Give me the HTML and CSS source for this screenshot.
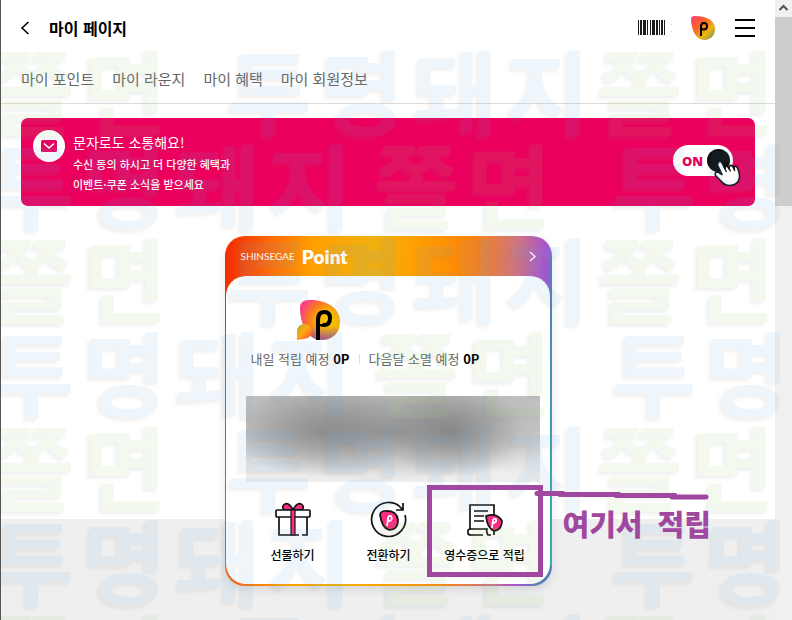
FILE: index.html
```html
<!DOCTYPE html>
<html lang="ko">
<head>
<meta charset="utf-8">
<meta name="viewport" content="width=device-width, initial-scale=1">
<title>마이 페이지</title>
<link rel="stylesheet" href="styles.css">
</head>
<body>
<div class="page">
  <header class="topbar">
    <button class="icon-btn" aria-label="뒤로"><svg width="10" height="14" viewBox="0 0 10 14"><path d="M7.500 1 L1 7 L7.500 13" fill="none" stroke="#000" stroke-width="1.600"/></svg></button>
    <h1>마이 페이지</h1>
    <div class="tools">
      <button class="icon-btn" aria-label="바코드"><svg width="33" height="16" viewBox="0 0 33 16"><path d="M0 0h1v15H0zM2 0h2v15H2zM5 0h3v15H5zM9 0h1v15H9zM12 0h1v15h-1zM14 0h3v15h-3zM18 0h2v15h-2zM21 0h1v15h-1zM23 0h2v15h-2zM26 0h1v15h-1z" fill="#1c1c1c"/><path d="M33 4h1v1h-1zM33 11h1v1h-1z" fill="#ffc37a"/></svg></button>
      <button class="icon-btn" aria-label="포인트"><svg width="24" height="25" viewBox="0 0 24 25">
        <defs><linearGradient id="drop" x1="0" y1="0" x2="1" y2="1"><stop offset="0" stop-color="#fb3b78"/><stop offset=".4" stop-color="#fa6b20"/><stop offset=".68" stop-color="#efb512"/><stop offset=".84" stop-color="#a7a33a"/><stop offset="1" stop-color="#9b4aa0"/></linearGradient></defs>
        <path d="M0 3Q0 0 4 0C15 0 24 4 24 13C24 20 19 24 13 24C6 24 0 15 0 3Z" fill="url(#drop)"/>
        <path d="M10 20V11Q10 7 13 7Q16 7 16 10Q16 13.500 12.500 13.500Q11 13.500 10 12" fill="none" stroke="#000" stroke-width="2"/></svg></button>
      <button class="icon-btn" aria-label="메뉴"><svg width="20" height="18" viewBox="0 0 20 18"><path d="M0 1h20M0 9h20M0 17h20" stroke="#000" stroke-width="2"/></svg></button>
    </div>
  </header>
  <nav class="tabs">
    <a href="#point">마이 포인트</a><a href="#lounge">마이 라운지</a><a href="#benefit">마이 혜택</a><a href="#member">마이 회원정보</a>
  </nav>
  <main>
    <section class="banner">
      <span class="mail"><svg width="16" height="12" viewBox="0 0 16 12"><rect width="16" height="12" rx="1.500" fill="#e5075f"/><path d="M3 3.500L8 8L13 3.500" fill="none" stroke="#fff" stroke-width="1.600"/></svg></span>
      <div class="banner-text">
        <h2>문자로도 소통해요!</h2>
        <p>수신 동의 하시고 더 다양한 혜택과<br>이벤트·쿠폰 소식을 받으세요</p>
      </div>
      <button class="toggle"><span>ON</span><i class="knob"></i>
        <svg class="hand" width="27" height="27" viewBox="0 0 27 27"><path d="M4 2.500Q6 0 8 3L11 9Q11 5 14 7L15 9Q15 4 18.500 6L20 9Q20 5 23 7Q26 13 25.500 18Q24 25 16 25.500Q10 25.500 7 21L1.500 15.500Q0 12 4 12L8 14.500L3.500 5Z" fill="#fff" stroke="#111" stroke-width="1.600" stroke-linejoin="round"/><path d="M11 9l1.500 3M15 8l1.500 3.500M20 8.500l.8 2.500" stroke="#111" stroke-width="1.300"/></svg>
      </button>
    </section>
    <div class="stage">
      <section class="card">
        <header class="card-head"><span class="brand-small">SHINSEGAE</span><strong>Point</strong>
          <svg class="chev" width="7" height="11" viewBox="0 0 7 11"><path d="M1 1L6 5.500L1 10" fill="none" stroke="#fff" stroke-width="1.300"/></svg>
        </header>
        <div class="card-body">
          <svg class="mark" width="44" height="41" viewBox="0 0 44 41">
            <defs>
              <radialGradient id="big" cx=".72" cy=".55" r=".75"><stop offset="0" stop-color="#f5cc00"/><stop offset=".4" stop-color="#f7ae0a"/><stop offset=".7" stop-color="#fb7426"/><stop offset="1" stop-color="#fa3f86"/></radialGradient>
              <linearGradient id="shade" x1="0" y1="0" x2="0" y2="1"><stop offset=".65" stop-color="#8652ad" stop-opacity="0"/><stop offset="1" stop-color="#8652ad" stop-opacity=".8"/></linearGradient>
              <linearGradient id="dot" x1="0" y1="0" x2="1" y2="1"><stop offset="0" stop-color="#a8a83a"/><stop offset=".45" stop-color="#ffaa11"/><stop offset="1" stop-color="#ff4438"/></linearGradient>
            </defs>
            <path d="M3 8Q3 0 12 0C30 0 43 8 43 22C43 34 34 40 24 40C11 40 3 24 3 8Z" fill="url(#big)"/>
            <path d="M3 8Q3 0 12 0C30 0 43 8 43 22C43 34 34 40 24 40C11 40 3 24 3 8Z" fill="url(#shade)"/>
            <path d="M0 32Q0 24 8 24Q15 25 15 32Q14 38 7 39L0 40Z" fill="url(#dot)"/>
            <path d="M21 40V20Q21 12 27 12Q33 12 33 18Q33 25 27 25Q24 25 24 24" fill="none" stroke="#000" stroke-width="4"/>
          </svg>
          <p class="stats"><span>내일 적립 예정 <b>0P</b></span><i></i><span>다음달 소멸 예정 <b>0P</b></span></p>
          <div class="hidden-area"></div>
          <div class="actions">
            <button><svg width="36" height="36" viewBox="0 0 36 36" fill="none" stroke="#111" stroke-width="1.700"><path d="M18 8Q14 0 10 2Q6 4 9 8zM18 8Q22 0 26 2Q30 4 27 8z" fill="#fa2c84"/><path d="M4 15V33H24M27 33H32V15"/><rect x="1" y="8" width="34" height="7" rx="1" fill="#fff"/><path d="M16 8h4v25h-4z" fill="#fa2c84" stroke-width="1.200"/></svg>선물하기</button>
            <button><svg width="36" height="36" viewBox="0 0 36 36" fill="none" stroke="#111" stroke-width="1.700"><path d="M31 7A17 17 0 1 0 34 13M32 1V8H25"/><path d="M9 13Q9 10 13 9Q26 8 27 18Q27 28 18 28Q11 26 9 13Z" fill="#fa2c84"/><path d="M16 24L17 16Q18 13 20 14Q22 17 19 19Q17 19 17 17" stroke="#fff"/></svg>전환하기</button>
            <button><svg width="36" height="36" viewBox="0 0 36 36" fill="none" stroke="#111" stroke-width="1.700"><path d="M3 27V3H27V14M7 9H21M7 14H17M7 19H17M4 27H20Q19 30 21 33H24M4 27Q0 27 1 31Q1 33 4 33H16M27 27V33"/><path d="M19 14Q30 10 35 19Q35 28 27 29Q20 26 19 14Z" fill="#fa2c84"/><path d="M25 26L26 18Q27 16 29 17Q30 20 27 21Q26 21 26 19" stroke="#fff"/></svg>영수증으로 적립</button>
          </div>
        </div>
        <div class="highlight"></div>
        <svg class="stroke-line" width="174" height="10" viewBox="0 0 174 10"><path d="M2 2.500H28M25 3.500H84M81 4.500H140M137 6H171" stroke="#a047a0" stroke-width="5" stroke-linecap="round"/></svg>
        <p class="note"><span>여기서</span><span>적립</span></p>
      </section>
    </div>
  </main>
</div>
<div class="scroll" aria-hidden="true"><svg width="17" height="17" viewBox="0 0 17 17"><path d="M4.500 10L8.500 6L12.500 10" fill="none" stroke="#505050" stroke-width="2"/></svg><div class="thumb"></div></div>
<div class="watermark" aria-hidden="true">
  <div class="row a"><div class="green"><span>쫄</span><span>면</span></div><div><span>투</span><span>명</span><span>돼</span><span>지</span></div><div class="green"><span>쫄</span><span>면</span></div></div>
  <div class="row b"><div><span>투</span><span>명</span><span>돼</span><span>지</span></div><div class="green"><span>쫄</span><span>면</span></div><div><span>투</span><span>명</span></div></div>
  <div class="row a"><div class="green"><span>쫄</span><span>면</span></div><div><span>투</span><span>명</span><span>돼</span><span>지</span></div><div class="green"><span>쫄</span><span>면</span></div></div>
  <div class="row b"><div><span>투</span><span>명</span><span>돼</span><span>지</span></div><div class="green"><span>쫄</span><span>면</span></div><div><span>투</span><span>명</span></div></div>
  <div class="row a"><div class="green"><span>쫄</span><span>면</span></div><div><span>투</span><span>명</span><span>돼</span><span>지</span></div><div class="green"><span>쫄</span><span>면</span></div></div>
  <div class="row b"><div><span>투</span><span>명</span><span>돼</span><span>지</span></div><div class="green"><span>쫄</span><span>면</span></div><div><span>투</span><span>명</span></div></div>
  <div class="row a"><div class="green"><span>쫄</span><span>면</span></div><div><span>투</span><span>명</span><span>돼</span><span>지</span></div><div class="green"><span>쫄</span><span>면</span></div></div>
</div>
</body>
</html>
```
FILE: styles.css
```css
* { box-sizing: border-box; margin: 0; padding: 0; }
body {
  position: relative;
  display: flex;
  min-height: 100vh;
  overflow: hidden;
  background: #efefef;
  border-left: 1px solid #555;
  font-family: "Noto Sans CJK KR", "Noto Sans", sans-serif;
  color: #000;
}
button { border: 0; background: none; font: inherit; color: inherit; }
svg { display: block; flex: none; overflow: visible; }
.page { flex: 1; min-width: 0; }

.topbar {
  display: flex;
  align-items: center;
  height: 56px;
  padding: 0 20px;
  background: #fff;
}
.topbar h1 { margin-left: 18px; font-size: 16px; line-height: 24px; font-weight: 700; }
.tools { display: flex; align-items: center; gap: 20px; margin-left: auto; }

.tabs {
  display: flex;
  gap: 18px;
  height: 48px;
  padding: 0 20px;
  background: #fff;
  border-bottom: 1px solid #ddd;
}
.tabs a { color: #666; font-size: 15px; line-height: 46px; text-decoration: none; }

main { padding-top: 14px; background: linear-gradient(#fff 415px, #efefef 415px); }
.banner {
  display: flex;
  height: 88px;
  margin: 0 20px;
  padding: 12px;
  background: #eb005d;
  border-radius: 7px;
  color: #fff;
}
.mail {
  display: flex;
  align-items: center;
  justify-content: center;
  width: 32px;
  height: 32px;
  background: #fff;
  border-radius: 50%;
}
.banner-text { margin-left: 8px; }
.banner h2 { font-size: 14px; line-height: 24px; font-weight: 400; }
.banner p { font-size: 11px; line-height: 20px; font-weight: 500; }
.toggle {
  position: relative;
  display: flex;
  align-items: center;
  justify-content: space-between;
  width: 60px;
  height: 31px;
  margin: 15px 10px 0 auto;
  padding: 0 3px 0 9px;
  background: #fff;
  border-radius: 16px;
  color: #e5005c;
  font: 800 13px "Open Sans", sans-serif;
}
.knob { width: 23px; height: 23px; background: #0a0a0a; border-radius: 50%; }
.hand { position: absolute; right: -8px; top: 15px; }

.stage { display: flex; justify-content: center; padding: 30px 0 34px; }
.card {
  position: relative;
  width: 327px;
  padding: 0 2px 2px 1px;
  border-radius: 20px;
  background:
    linear-gradient(#557fbd 40px, #35aab5 250px) right 20px / 2px 310px no-repeat,
    linear-gradient(95deg, #f22800 0%, #ff6a08 13%, #ffa000 25%, #f0b010 42%, #ffa000 53%, #ff8508 68%, #cd7580 82%, #a854cc 90%, #557fbd 96%);
  box-shadow: 0 4px 10px rgba(0, 0, 0, .1);
}
.card-head {
  display: flex;
  align-items: center;
  height: 40px;
  padding: 0 14px 0 15px;
  color: #fff;
}
.brand-small { font: 400 10px Lato, sans-serif; }
.card-head strong { margin-left: 7px; font: 800 19px Lato, sans-serif; }
.chev { margin-left: auto; }
.card-body {
  display: flex;
  flex-direction: column;
  height: 308px;
  padding: 24px 10px 0 20px;
  background: #fff;
  border-radius: 20px;
}
.mark { margin-left: 51px; }
.stats {
  display: flex;
  align-items: center;
  margin: 8px 0 27px 5px;
  color: #666;
  font-size: 13px;
  line-height: 20px;
}
.stats b { color: #000; }
.stats i { width: 1px; height: 10px; margin: 0 9px; background: #ddd; }
.hidden-area {
  height: 86px;
  background:
    radial-gradient(ellipse 70px 46px at 70% 42%, rgba(90, 90, 90, .45), transparent),
    radial-gradient(ellipse 90px 46px at 26% 42%, rgba(95, 95, 95, .4), transparent),
    radial-gradient(ellipse 180px 50px at 48% 42%, rgba(110, 110, 110, .5), transparent),
    linear-gradient(#bebebe, #cacaca 40%, #eee 92%);
}
.actions {
  display: grid;
  grid-template-columns: repeat(3, 96px);
  margin-top: 20px;
  margin-left: -1px;
}
.actions button {
  display: flex;
  flex-direction: column;
  align-items: center;
  gap: 8px;
  font-size: 12px;
  line-height: 18px;
  font-weight: 500;
  white-space: nowrap;
}
/* Hand-drawn annotation lying over the card */
.highlight, .stroke-line, .note { z-index: 2; }
.highlight {
  position: absolute;
  right: 9px;
  bottom: 9px;
  width: 116px;
  height: 92px;
  border: 5px solid #a047a0;
}
.stroke-line { position: absolute; left: 310px; top: 255px; }
.note {
  position: absolute;
  left: 338px;
  top: 267px;
  display: flex;
  gap: 15px;
  color: #a047a0;
  font-size: 29px;
  line-height: 40px;
  font-weight: 900;
  white-space: nowrap;
}

.scroll { width: 17px; background: #f0f0f0; }
.thumb { height: 189px; background: #cdcdcd; }

/* Embossed watermark across the whole window */
.watermark {
  position: absolute;
  inset: 41px 0 0 0;
  z-index: 1;
  overflow: hidden;
  pointer-events: none;
  opacity: .1;
  color: #64a8e0;
  font-size: 92px;
  line-height: 94px;
  font-weight: 700;
  text-shadow: -3px 3px 3px #888;
}
.watermark .green { color: #92cc70; }
.row, .row div { display: flex; gap: 8px; }
.row { margin-left: -11px; }
.row.a .green:first-child { margin-right: 52px; }
.row.b .green { margin: 0 52px 0 14px; }
```
